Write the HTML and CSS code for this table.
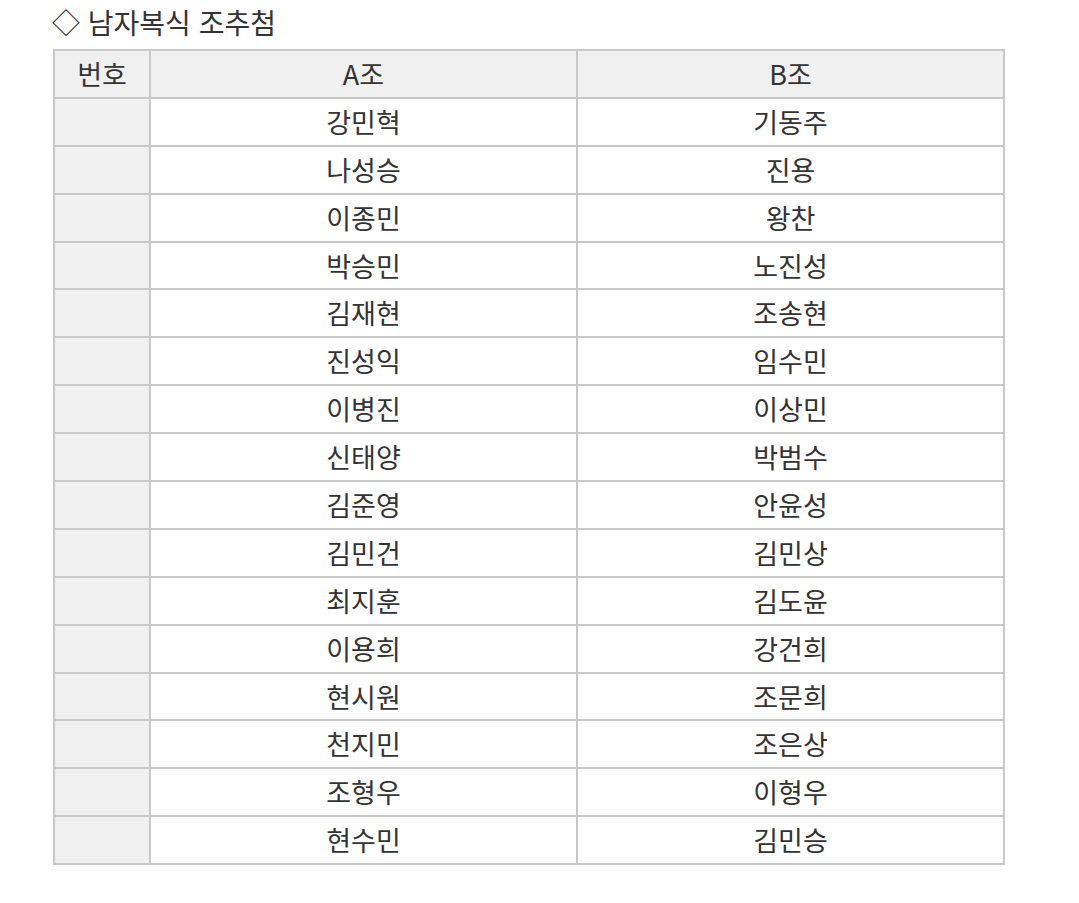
FILE: index.html
```html
<!DOCTYPE html>
<html lang="ko">
<head>
<meta charset="utf-8">
<link rel="stylesheet" href="styles.css">
</head>
<body>
<div class="page">
  <h2 class="title">◇ 남자복식 조추첨</h2>
  <table class="draw">
    <colgroup><col class="c-no"><col class="c-a"><col class="c-b"></colgroup>
    <thead>
      <tr><th>번호</th><th>A조</th><th>B조</th></tr>
    </thead>
    <tbody>
      <tr><td class="no"></td><td>강민혁</td><td>기동주</td></tr>
      <tr><td class="no"></td><td>나성승</td><td>진용</td></tr>
      <tr><td class="no"></td><td>이종민</td><td>왕찬</td></tr>
      <tr><td class="no"></td><td>박승민</td><td>노진성</td></tr>
      <tr><td class="no"></td><td>김재현</td><td>조송현</td></tr>
      <tr><td class="no"></td><td>진성익</td><td>임수민</td></tr>
      <tr><td class="no"></td><td>이병진</td><td>이상민</td></tr>
      <tr><td class="no"></td><td>신태양</td><td>박범수</td></tr>
      <tr><td class="no"></td><td>김준영</td><td>안윤성</td></tr>
      <tr><td class="no"></td><td>김민건</td><td>김민상</td></tr>
      <tr><td class="no"></td><td>최지훈</td><td>김도윤</td></tr>
      <tr><td class="no"></td><td>이용희</td><td>강건희</td></tr>
      <tr><td class="no"></td><td>현시원</td><td>조문희</td></tr>
      <tr><td class="no"></td><td>천지민</td><td>조은상</td></tr>
      <tr><td class="no"></td><td>조형우</td><td>이형우</td></tr>
      <tr><td class="no"></td><td>현수민</td><td>김민승</td></tr>
    </tbody>
  </table>
</div>
</body>
</html>
```
FILE: styles.css
```css
html, body {
  margin: 0;
  padding: 0;
  background: #ffffff;
}
body {
  font-family: "Noto Sans CJK KR", "Noto Sans", sans-serif;
  color: #333333;
}
.page {
  padding: 4px 0 0 52px;
}
.title {
  margin: 0;
  height: 45px;
  font-size: 28px;
  font-weight: 400;
  line-height: 36px;
  color: #333333;
}
.draw {
  border-collapse: collapse;
  width: 950px;
  table-layout: fixed;
  margin-left: 1px;
}
.c-no { width: 96px; }
.c-a { width: 427px; }
.c-b { width: 427px; }
.draw th,
.draw td {
  border: 2px solid #c8c8c8;
  height: 45.9px;
  padding: 0;
  text-align: center;
  vertical-align: middle;
  font-size: 27px;
  font-weight: 400;
  line-height: 44px;
  color: #333333;
}
.draw th {
  background: #f0f0f0;
}
.draw td.no {
  background: #f0f0f0;
}
```
